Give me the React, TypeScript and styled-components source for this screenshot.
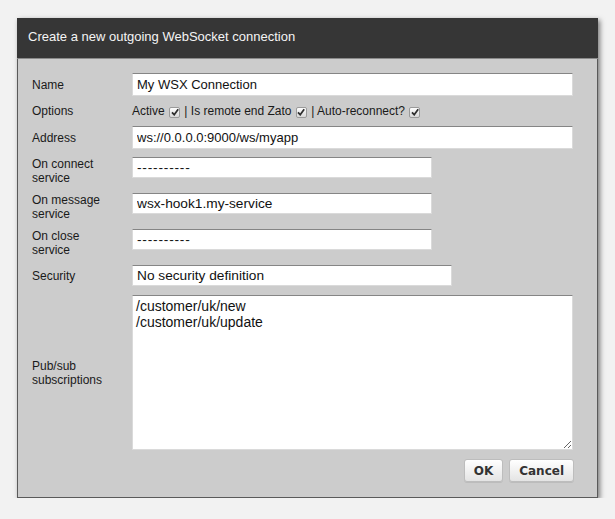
import styled, { createGlobalStyle } from "styled-components";

const GlobalStyle = createGlobalStyle`
    html, body {
        margin : 0;
        padding : 0;
        background : #f2f2f2;
        font-family : "Liberation Sans", Arial, sans-serif;
    }
`;

interface FieldProps {
    label : string;
    align? : "center" | "start";
    gap? : number;
    children : React.ReactNode;
}

function Field({label, align = "center", gap = 0, children} : FieldProps) {
    return (
        <RowStyle $align={align} $gap={gap}>
            <Label>{label}</Label>
            {children}
        </RowStyle>
    );
}

function Check() {
    return (
        <CheckBox>
            <svg width="8" height="8" viewBox="0 0 10 10">
                <path d="M1.2 5.6 L4 8.4 L9 1.6" fill="none" stroke="#2e2e2e" strokeWidth="2.2" />
            </svg>
        </CheckBox>
    );
}

function App() {
    return (
        <>
            <GlobalStyle />
            <Dialog>
                <TitleBar>Create a new outgoing WebSocket connection</TitleBar>
                <Body>
                    <Field label="Name">
                        <TextInput $width={441} defaultValue="My WSX Connection" />
                    </Field>
                    <Field label="Options" gap={7}>
                        <Options>
                            Active <Check /> | Is remote end Zato <Check /> | Auto-reconnect? <Check />
                        </Options>
                    </Field>
                    <Field label="Address" gap={7}>
                        <TextInput $width={441} defaultValue="ws://0.0.0.0:9000/ws/myapp" />
                    </Field>
                    <Field label={"On connect\nservice"} align="start" gap={8}>
                        <TextInput $width={300} $height={21} $size={13.7} $spacing={0.8} defaultValue="----------" />
                    </Field>
                    <Field label={"On message\nservice"} align="start" gap={8}>
                        <TextInput $width={300} $height={21} $size={13.7} defaultValue="wsx-hook1.my-service" />
                    </Field>
                    <Field label={"On close\nservice"} align="start" gap={8}>
                        <TextInput $width={300} $height={21} $size={13.7} $spacing={0.8} defaultValue="----------" />
                    </Field>
                    <Field label="Security" gap={8}>
                        <TextInput $width={320} $height={21} $size={13.7} defaultValue="No security definition" />
                    </Field>
                    <Field label={"Pub/sub\nsubscriptions"} gap={9}>
                        <TextArea defaultValue={"/customer/uk/new\n/customer/uk/update"} />
                    </Field>
                    <Buttons>
                        <Button>OK</Button>
                        <Button>Cancel</Button>
                    </Buttons>
                </Body>
            </Dialog>
        </>
    );
}

const Dialog = styled.div`
    margin : 18px 0 0 17px;
    width : 581px;
    box-sizing : border-box;
    border : 1px solid #5a5a5a;
    border-top : none;
    box-shadow : 2px 2px 5px rgba(0, 0, 0, 0.5);
`;

const TitleBar = styled.div`
    height : 40px;
    background : #363636;
    color : #f4f4f4;
    font-size : 13px;
    line-height : 38px;
    padding : 0 0 0 11px;
    margin : 0 -1px;
    border-bottom : 1px solid #8a8a8a;
`;

const Body = styled.div`
    background : #cccccc;
    padding : 14px 23px 15px 14px;
    display : flex;
    flex-direction : column;
`;

const RowStyle = styled.div<{ $align : string; $gap : number }>`
    display : flex;
    align-items : ${({$align}) => $align === "start" ? "flex-start" : "center"};
    margin-top : ${({$gap}) => $gap}px;
`;

const Label = styled.div`
    width : 100px;
    flex-shrink : 0;
    font-size : 12px;
    line-height : 14px;
    color : #1a1a1a;
    white-space : pre-line;
`;

const TextInput = styled.input<{ $width : number; $height? : number; $size? : number; $spacing? : number }>`
    width : ${({$width}) => $width}px;
    height : ${({$height}) => $height ?? 23}px;
    box-sizing : border-box;
    margin : 0;
    padding : 0 4px;
    border : 1px solid #dadada;
    border-top-color : #858585;
    background : #ffffff;
    font-family : "Liberation Sans", Arial, sans-serif;
    font-size : ${({$size}) => $size ?? 13}px;
    letter-spacing : ${({$spacing}) => $spacing ?? 0}px;
    color : #111;
    outline : none;
`;

const TextArea = styled.textarea`
    width : 441px;
    height : 155px;
    box-sizing : border-box;
    margin : 0;
    padding : 2px 3px;
    border : 1px solid #dadada;
    border-top-color : #858585;
    background : #ffffff;
    font-family : "Liberation Sans", Arial, sans-serif;
    font-size : 14px;
    line-height : 16px;
    color : #111;
    outline : none;
`;

const Options = styled.div`
    display : flex;
    align-items : center;
    height : 16px;
    font-size : 12px;
    color : #1a1a1a;
    white-space : pre;
`;

const CheckBox = styled.span`
    display : inline-flex;
    align-items : center;
    justify-content : center;
    width : 9px;
    height : 9px;
    margin : 2px 1px 0 1px;
    border : 1px solid #9a9a9a;
    border-radius : 2px;
    background : linear-gradient(#fdfdfd, #d8d8d8);
`;

const Buttons = styled.div`
    display : flex;
    justify-content : flex-end;
    gap : 6px;
    margin-top : 9px;
`;

const Button = styled.button`
    height : 23px;
    padding : 0 9px;
    border : 1px solid #bdbdbd;
    border-radius : 3px;
    background : linear-gradient(#ffffff, #e4e4e4);
    font-family : "DejaVu Sans", Verdana, sans-serif;
    font-weight : bold;
    font-size : 12px;
    color : #333;
    box-shadow : 0 1px 0 rgba(0, 0, 0, 0.08);
`;

export default App;
